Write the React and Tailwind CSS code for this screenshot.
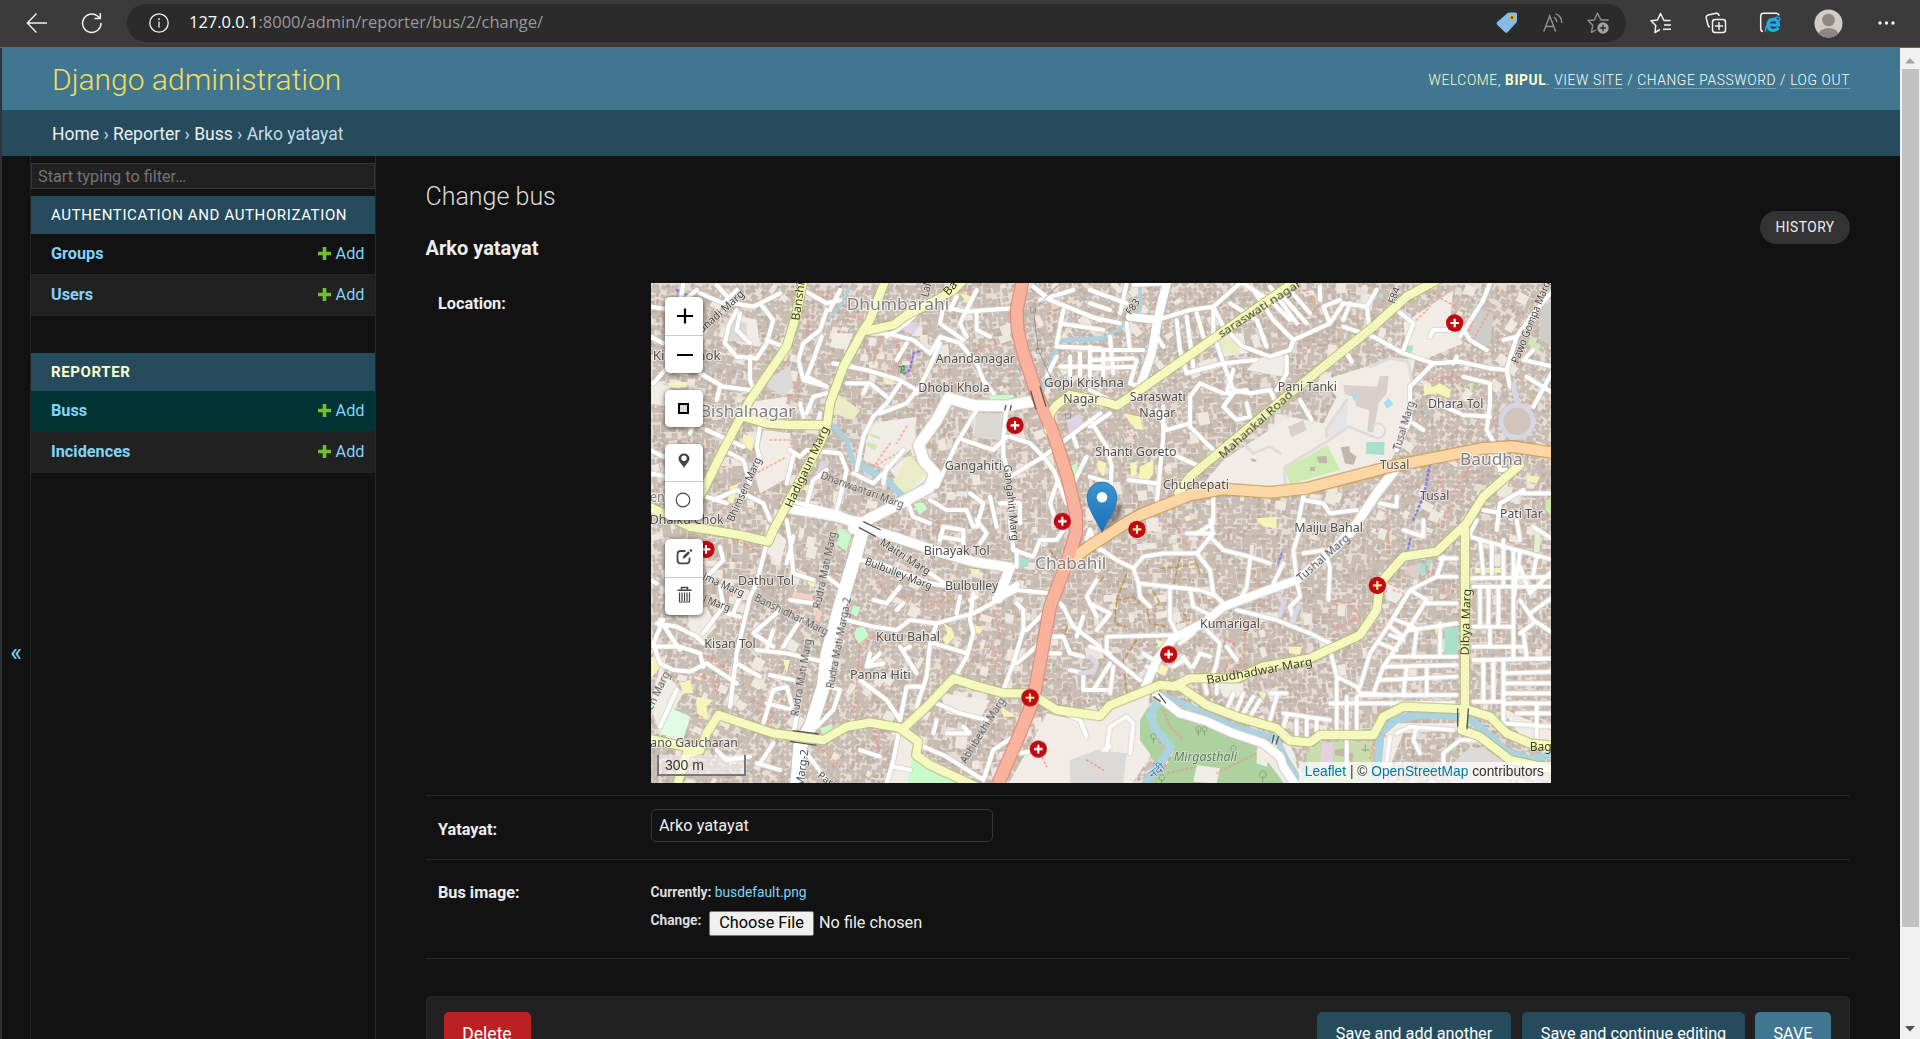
import React from "react";

/* ------------------------------------------------------------------ */
/* Map data: four sheets, three units per pixel                        */
/* ------------------------------------------------------------------ */
const SHEETS = { nw: [-33, -39], ne: [1317, -39], sw: [-33, 711], se: [1317, 711] };

const shift = (q) => `translate(${SHEETS[q][0]} ${SHEETS[q][1]})`;

function makeBuildings(seed, skip, cell, min, spread) {
  let s = seed;
  const rnd = () => {
    s = (s * 1664525 + 1013904223) % 4294967296;
    return s / 4294967296;
  };
  let d = "";
  for (let y = 0; y < 1500; y += cell) {
    for (let x = 0; x < 2700; x += cell) {
      const keep = rnd() > skip;
      const w = min + rnd() * spread;
      const h = min + rnd() * spread;
      const ox = x + rnd() * 7;
      const oy = y + rnd() * 7;
      if (!keep) continue;
      const a = 0.35 * Math.sin(x / 310) + 0.3 * Math.cos(y / 230 + x / 500);
      const c = Math.cos(a);
      const n = Math.sin(a);
      d += `M${ox | 0} ${oy | 0}l${(w * c).toFixed(1)} ${(w * n).toFixed(1)}l${(-h * n).toFixed(1)} ${(h * c).toFixed(1)}l${(-w * c).toFixed(1)} ${(-w * n).toFixed(1)}z`;
    }
  }
  return d;
}
const BUILDINGS_A = makeBuildings(7, 0.1, 15, 9, 11);
const BUILDINGS_B = makeBuildings(91, 0.7, 15, 6, 9);
const YARDS = makeBuildings(313, 0.93, 26, 12, 26);

const OPEN = [
  ["ne", "M830 290L900 262L975 270L955 370L980 400L930 510L905 570L640 645L330 655L400 570L600 440L700 460L740 380L700 330Z"],
  ["ne", "M940 160L1090 60L1080 150L1120 220L1000 270L950 240Z"],
  ["ne", "M500 265L590 255L580 320L470 300Z"],
  ["ne", "M380 190L460 190L470 250L400 260Z"],
  ["nw", "M335 395L440 380L450 440L400 450L320 430Z"],
  ["nw", "M370 480L450 490L460 560L450 620L360 670L340 600Z"],
  ["nw", "M1000 440L1090 450L1085 510L1000 500Z"],
  ["nw", "M690 460L830 440L820 530L740 600L670 570Z"],
  ["nw", "M30 330L90 350L80 410L30 400Z"],
  ["nw", "M270 130L350 150L360 230L290 220Z"],
  ["nw", "M580 190L640 190L620 240L570 230Z"],
  ["nw", "M800 560L880 620L800 670L750 600Z"],
  ["sw", "M60 440L130 520L60 640L30 560Z"],
  ["sw", "M900 520L1050 540L1020 600L920 580Z"],
  ["sw", "M1220 580L1400 620L1400 800L1100 800L1180 660Z"],
  ["sw", "M140 270L200 260L230 320L190 360L150 330Z"],
  ["sw", "M780 640L830 680L830 800L740 800Z"],
  ["sw", "M380 10L440 60L420 130L370 90Z"],
  ["se", "M-60 600L60 560L180 520L170 600L200 680L120 800L-60 800Z"],
  ["se", "M500 680L600 670L640 800L520 800Z"],
  ["se", "M880 610L1100 610L1110 630L940 640L900 740L880 800L860 800Z"],
  ["se", "M380 490L460 490L460 530L400 530Z"],
  ["se", "M890 190L945 215L920 250L890 240Z"],
  ["se", "M1230 560L1400 640L1400 700L1300 660Z"],
];

const AREAS = [
  ["ne", "#cdebb0", "M585 595L712 525L750 600L600 642Z"],
  ["ne", "#aae0cb", "M828 517L884 515L882 555L828 551Z"],
  ["ne", "#aae0cb", "M862 72L878 70L878 84L864 84ZM950 226L970 228L966 246L950 242ZM40 292L60 290L60 303L40 303Z"],
  ["ne", "#cdebb0", "M1320 205L1352 228L1346 242L1312 222ZM1366 690L1390 684V740L1366 720ZM1140 340L1150 338L1148 362L1140 360Z"],
  ["ne", "#d9d0c9", "M760 345L860 350L870 318L896 318L890 370L866 400L850 488L832 484L838 420L800 410L790 380L764 372Z"],
  ["ne", "#d9d0c9", "M594 470L640 450L650 480L604 502ZM690 360L720 350L726 380L700 384Z"],
  ["ne", "#e4e4e4", "M712 480L760 400L775 405L768 470L712 505Z"],
  ["ne", "#cfcdca", "M1150 110L1210 130L1200 230L1120 200Z"],
  ["ne", "#c2b5aa", "M752 532L778 528L780 545L800 560L790 585L765 580ZM680 560L710 558L712 580L686 580ZM660 590L676 592L674 604L660 602ZM484 565A8 8 0 1 0 500 570Z"],
  ["ne", "#cfcdca", "M1350 110L1390 90L1390 230L1350 210Z"],
  ["nw", "#dcdad8", "M390 320L450 290L460 350L430 380L380 350ZM250 140L320 160L320 220L260 210Z"],
  ["nw", "#dcd9d5", "M1010 430L1095 430L1090 510L1000 500Z"],
  ["nw", "#c8facc", "M820 700L850 698L862 716L838 734ZM1284 590L1310 580L1312 610L1290 628ZM1045 376L1110 374L1140 388L1050 392Z"],
  ["nw", "#b8e3cd", "M360 126L384 108L388 130L366 134Z"],
  ["nw", "#cdebb0", "M680 516L712 526L706 540L682 530ZM690 490L720 500L718 508L690 498Z"],
  ["nw", "#e9ecc4", "M806 556L864 602L790 680L756 640ZM590 370L660 420L640 450L580 430Z"],
  ["nw", "#e0d3e6", "M790 160L840 165L820 195L786 180ZM1280 450L1320 430L1336 470L1290 500Z"],
  ["nw", "#d5d5e4", "M540 575L570 570L560 600L530 614ZM670 600L690 590L690 620L670 630Z"],
  ["nw", "#f3cfc4", "M1230 90L1260 80L1262 110L1236 120ZM1130 470L1150 480L1140 500Z"],
  ["nw", "#f7f4b8", "M310 490L344 510L336 542L306 528ZM725 310L764 320L760 345L736 340ZM490 650L516 640L510 680ZM960 70L1000 80L980 100ZM270 650L296 640L280 700L262 700ZM80 340L140 335L140 352L90 352Z"],
  ["ne", "#f7f4b8", "M120 580L140 575L140 612L124 620ZM150 590L190 570L190 610L170 640L146 625ZM1000 345L1030 350L1050 340L1084 360L1076 385L1040 370L1004 376ZM100 430L150 440L160 480L136 476ZM500 745L560 740L560 775L520 770ZM1310 615L1350 620L1340 640L1310 635ZM24 570L50 580L40 620L24 600ZM284 740L300 735L298 752L286 752Z"],
  ["ne", "#e9ecc4", "M385 200L440 210L450 250L400 250Z"],
  ["sw", "#dffce2", "M95 565L152 590L128 660L60 642Z"],
  ["sw", "#c8facc", "M592 25L634 45L620 94L596 78ZM648 325L672 320L686 346L658 372L644 352ZM640 256L662 262L650 290L632 280ZM820 685L1010 800L800 800ZM540 625L576 612L580 636L548 645Z"],
  ["sw", "#aae0cb", "M1124 115L1168 114L1164 140L1118 144Z"],
  ["sw", "#c5e6d2", "M1206 230L1224 240L1216 275L1200 262Z"],
  ["sw", "#f7f4b8", "M120 490L150 480L160 520L128 520ZM170 530L220 540L200 560L205 600L170 580ZM910 310L935 325L945 350L920 375L908 360L922 340ZM990 315L1030 320L1020 342L990 335ZM430 420L450 420L440 460ZM1085 560L1130 590L1090 590ZM500 185L530 180L520 205ZM985 145L1020 150L1010 165ZM30 405L60 440L30 480Z"],
  ["sw", "#f3cfc4", "M460 215L520 225L515 245L455 235ZM530 270L546 275L538 305L526 300Z"],
  ["se", "#aed1a0", "M200 540L250 580L330 615L470 650L500 690L530 720L590 800L140 800L220 760L255 690L215 650L195 600ZM150 600L175 560L200 660L230 690L200 730L150 660Z"],
  ["se", "#aae0cb", "M1065 322L1106 322L1104 406L1062 406ZM984 130L1006 132L1006 160L984 165ZM1010 120L1022 120L1020 138L1008 136Z"],
  ["se", "#c9dcae", "M650 700L690 665L850 665L845 800L650 800Z"],
  ["se", "#e3d0e0", "M696 668L730 668L726 740L692 730Z"],
  ["se", "#c2b5aa", "M735 690L765 685L765 710L735 705ZM770 700L790 700L788 725L770 722Z"],
  ["se", "#d9d0c9", "M950 140L990 130L985 180L945 160Z"],
  ["se", "#f7f4b8", "M1155 144L1236 144L1236 158L1155 158ZM594 380L636 380L630 404L598 400ZM200 360L225 365L215 385L205 380ZM205 430L235 445L225 468L205 460ZM505 515L530 520L520 540ZM1030 320L1045 320L1040 345ZM535 -6L555 0L550 20L535 22Z"],
  ["se", "#f0eee4", "M320 735L390 745L380 790L310 785ZM500 690L540 700L530 740L500 730Z"],
  ["se", "#dcdad6", "M20 690L110 700L100 790L-60 790L-60 720ZM1090 730L1130 690L1180 680L1260 740L1260 800L1080 800Z"],
  ["se", "#e6efd0", "M1335 20L1352 24L1348 96L1332 96Z"],
];

const RIVERS = [
  ["se", 24, "M205 545L180 585L195 625L242 680L215 725L160 800"],
  ["se", 18, "M215 524L300 560L420 615L560 655L585 710L640 800"],
  ["se", 24, "M858 800L872 640L920 597L1000 583L1130 590L1185 635L1250 695L1320 720L1400 700"],
  ["ne", 10, "M150 30L150 120L90 175L40 205L-20 212"],
  ["nw", 12, "M1390 205L1270 210L1240 250L1215 340L1195 400L1130 395"],
  ["nw", 14, "M575 465L620 510L638 575L700 610"],
  ["nw", 20, "M660 585L740 630L800 690"],
  ["nw", 8, "M630 50L600 110L570 140M480 270L500 330"],
];

const MINOR = {
  nw: "M30 110L100 120L170 60M230 45L280 100L340 110L420 70M130 40L120 100M180 70L250 100L290 60M290 120L265 170L255 220L290 260L350 265L380 220L400 150L360 100M380 210L430 230M300 130L290 180L330 220M330 260L330 330L350 380M180 310L250 350L330 360M240 350L230 390M40 340L75 300M30 540L70 560L160 545M200 480L310 530M150 490L170 440M360 470L350 530L360 570M560 120L540 180L490 220L475 270L490 330L560 350M570 120L600 60M490 60L560 100L600 90M545 200L520 270L500 320M500 320L560 350M580 280L680 300L780 330L830 360M620 340L690 340L740 380M680 350L670 370M780 340L740 400L700 440L670 500L650 600M830 360L800 400L720 430M690 190L740 190L820 210L870 250M870 250L900 200L960 220L1010 280L1030 330L1060 370M830 370L870 290L900 220M740 200L800 160L830 130M910 110L980 125L1110 115M910 110L900 160L970 210M1010 130L1010 180L1050 200M930 120L950 80L920 50M980 120L960 160L980 200M1010 60L980 120M800 220L770 270M500 430L520 380L560 370M490 440L480 400M540 430L530 470M450 540L480 560L500 540L600 550L620 600L590 720M560 600L520 630L500 700M640 610L700 640L740 600L790 540M730 640L740 590M800 690L820 740L870 760M870 690L920 720L980 720L1000 770M890 650L950 520L1010 420M970 510L1060 540L1100 500M1100 410L1090 500L1090 560L1110 620L1210 560M1110 500L1170 520L1210 560L1380 430M1300 500L1310 530M1210 560L1240 600L1280 700M1250 640L1230 700L1250 760M1340 560L1300 640M1180 50L1230 90L1380 150M1200 90L1300 60M1260 160L1390 180M1290 260L1290 320M1320 250L1320 320M1350 230L1350 320M1250 230L1380 235M1260 290L1390 290M1250 260L1220 320M1270 120L1250 220M1080 700L1140 700L1140 760M1050 680L1070 770M990 670L1030 700L1010 770M250 540L310 570L330 640M220 690L290 660L370 700L390 750M200 680L260 700M460 560L440 640M440 690L480 700L600 730M30 610L80 620M30 200L70 220",
  ne: "M0 60L110 100M0 100L60 120M110 40L90 130M120 140L200 150L300 120L370 110L450 40M370 110L400 170L460 230L540 260L600 240L610 210L550 150L490 60L460 40M420 100L500 150L530 230M260 150L270 240L290 310L400 280L500 270M290 140L310 290M320 130L340 200M370 120L370 190L400 280L430 360L480 370L540 360L560 400M490 60L540 90L600 150M540 50L620 160M570 70L650 160M600 60L660 130M610 210L720 160L760 100L830 110L860 60M720 160L700 110L750 90M760 150L780 100M760 170L850 200L940 250L1030 280L960 350L960 450L920 540M830 110L840 190M920 120L970 160L940 240M1030 280L1110 275L1200 295L1250 300L1260 350M1250 300L1280 200L1330 130L1390 60M1280 200L1240 210M1330 240L1300 270L1390 290M1110 200L1180 90L1200 40M1020 200L1030 180L1090 180M1110 160L1140 210L1190 240M1120 320L1200 340L1200 400L1190 480L1210 515M1120 435L1200 440M1310 320L1390 370M1390 300L1330 410M590 260L590 310L560 360M430 300L410 370L470 360M470 400L480 440L440 450L400 410L430 370M400 370L330 340L300 380L300 470L380 550M300 460L230 480L200 420M220 410L220 500L200 700M220 540L330 590M115 630L200 640M0 450L50 530L65 590L60 680M0 470L60 430M160 240L110 240L0 240M0 270L130 265M0 295L130 290M60 200L70 310M40 240L40 320M110 160L120 240M0 140L90 160M190 180L220 230M630 390L665 450M0 620L60 640M690 50L690 90M770 250L785 275M1040 400L1110 430M870 700L920 710L920 680M640 690L700 700L720 730L800 720M620 780L640 680M370 680L370 760L320 790M970 460L1000 480M1210 515L1230 600L1250 600M1180 720L1290 740M1220 780L1230 700L1300 660M1290 670L1390 670M1100 260L1090 280M220 40L130 45M140 270L120 340L150 350M0 360L60 390",
  sw: "M440 0L450 60L460 160L520 180M380 70L350 190L330 230L290 400L280 480L270 560M460 50L440 130M560 170L600 200M450 240L520 250M420 270L340 340L400 380M400 330L380 390M480 300L430 380M350 390L440 400L550 425M50 310L110 320L170 350L190 370M40 380L120 380L180 400L190 440M70 300L40 370L60 430L100 450L150 455L200 430L290 490M120 390L60 300M200 170L250 120L240 80M130 260L170 240M240 200L250 260L190 340M280 280L300 230M260 280L300 290M50 190L30 180M110 510L60 620M290 430L360 470M390 465L460 480M380 550L460 570L440 500L400 510L370 610M570 500L600 510L580 570L530 620M470 590L460 640M660 120L720 130L870 190L930 200M870 160L930 200M780 200L740 250L700 240M770 270L790 250M620 300L700 320L770 330L810 300L890 310L1000 280L1130 210M890 310L870 370L860 470L830 560M880 370L980 400M1000 220L990 300L1000 340L980 410L940 480M960 230L950 280M990 240L1010 230M690 400L680 440L730 430M780 380L830 460M790 390L810 380M660 480L740 540L780 600M800 500L780 600M800 500L850 500M690 430L720 400M890 550L960 580L1040 600M920 640L990 640L970 620M880 640L890 600M780 620L760 720L740 790M760 740L810 750M660 690L720 710M350 730L420 750M500 700L560 780M400 670L360 730M230 690L260 720L330 710M1130 210L1230 220L1270 260L1300 320L1380 380M1130 250L1150 270L1150 330L1120 430L1090 510M1220 270L1160 330M1200 370L1130 430M1230 350L1270 350L1290 400L1330 410M1330 290L1310 350M1130 90L1130 140M1110 0L1120 90L1180 110L1200 60L1250 60L1270 30M1350 30L1340 60L1380 90M1370 180L1340 230L1370 290M1290 450L1330 460L1330 510L1400 510M850 680L920 710L1030 780M1030 780L1060 690L1120 650M1140 700L1190 690M1250 570L1320 600L1340 650M900 60L910 20L970 30L970 70M1010 0L1040 40L1020 70M900 50L960 60M1220 400L1260 400",
  se: "M0 30L20 80L80 120L130 145L160 110L220 100L320 100L360 150L370 220L400 250M130 145L145 190L330 210L370 225M145 190L150 230L180 260M240 210L240 300L260 340M50 350L250 345M50 350L50 400L150 480M0 250L60 280L20 330M0 380L60 400M60 430L10 510M70 440L60 520M300 210L310 260L370 290M290 40L370 40L320 100M370 40L360 0M370 60L400 90L480 110L540 130M480 120L470 200L450 240M580 130L550 190M640 100L700 90L720 140L715 240M640 0L610 90L620 180L630 230L600 260M440 270L560 300L660 340L720 370M350 330L390 370L380 430L370 460M410 380L440 420M310 440L330 400L360 410M280 410L300 440M250 440L280 420M270 370L310 340M160 400L190 420M600 260L610 300M1000 0L1000 50L940 30M1140 50L1280 90L1390 120M1150 200L1390 200M1140 175L1390 170M1100 170L1040 170L960 210L900 310L840 400L810 500M960 210L1010 240L940 350L880 440L850 520M1060 110L1040 170M1050 115L1100 115M1100 250L1010 250M1100 310L960 330M1050 310L1050 400M1100 410L900 410M1100 435L880 440M1100 470L870 480M1100 525L810 525M980 330L970 410M1010 440L1010 520M950 440L940 520M920 300L970 320M900 320L940 350M870 370L920 390M720 390L740 470L800 500L810 520L900 525M740 480L740 630M770 530L770 630M800 530L800 630M720 550L1090 550M580 580L720 600M590 590L580 620M620 600L620 660M650 600L650 650M680 600L680 640M430 520L410 570M460 520L440 570M490 530L460 580M510 540L480 590M540 520L590 520M560 530L540 600M770 660L770 740M900 650L890 720M980 620L970 660L990 700M920 640L960 620L1090 630M1060 740L1060 700L1110 660L1160 660M60 680L40 690M50 690L60 620L110 590L130 610L120 700M1240 60V200M1270 90V420M1290 100L1270 240M1340 110L1330 160M1150 320L1270 320M1150 380L1300 380M1150 420L1390 415M1150 545L1230 545M1170 60L1180 160M1205 70V160M1170 210V310M1195 210V310M1225 210V310M1200 320V380M1180 425V540M1210 425V540M1240 425V600M1240 460L1390 455M1240 490L1390 490M1240 520L1390 520M1240 550L1390 550M1280 580L1390 580M1240 610L1390 620M1340 560L1340 660M1290 240L1330 300L1390 340M1320 280L1390 230M1290 140L1320 220L1390 150M1290 340L1330 310M1300 340L1310 410M1330 20L1390 60M1280 0L1290 60M1160 0L1140 40M340 470L350 520M380 470L380 520M170 440L200 450M940 360L900 345",
};

const MID = [
  ["nw", 34, "M1185 392L1100 408L1000 406L925 384L890 450L836 525L850 570L885 610L868 652L800 690L690 745L640 775"],
  ["nw", 28, "M440 715L470 720L560 735L680 760"],
  ["sw", 30, "M600 -10L680 25L760 50L880 90L1000 125L1110 142L1075 235"],
  ["sw", 20, "M1065 235L1130 195"],
  ["sw", 40, "M665 40L645 110L600 260L562 400L550 500L515 610L480 680L470 800"],
  ["ne", 26, "M232 30L205 140L185 250L150 350"],
  ["ne", 24, "M200 150L120 140"],
  ["ne", 28, "M915 600L860 670L780 790"],
  ["se", 26, "M790 20L740 80L620 180L520 215L400 260L340 310L250 355L200 420L165 500"],
  ["se", 26, "M200 525L270 580L340 600L430 640L520 670L570 710L580 740L620 800"],
];

const YELLOW = [
  ["nw", "M492 20L470 130L440 230L330 390L260 520L190 660L165 705"],
  ["nw", "M740 20L690 150L670 180L610 290L570 400L560 470L540 520L400 780L385 815L300 795L150 770L30 712"],
  ["nw", "M980 20L940 60L890 90L800 135L760 165L680 182"],
  ["nw", "M300 437L380 460L450 465L555 465"],
  ["nw", "M1225 480L1230 430L1250 405L1290 375L1400 397L1430 407L1500 360L1650 255L1960 38"],
  ["ne", "M265 670L300 620L600 370L850 170L950 80L1050 25"],
  ["sw", "M20 655L180 690L200 640L235 585L400 640L550 660L620 620L690 608L790 625L860 560L940 475L1000 495L1090 520L1170 520L1250 570L1380 588L1410 555L1560 495L1620 500L1700 555L1790 590L1910 625L1950 662L2010 667L2040 645L2200 645L2230 590L2290 560L2480 568L2550 590L2600 640L2670 670L2760 680"],
  ["sw", "M180 690L140 700L110 800"],
  ["sw", "M780 625L835 665L828 705L870 735L1010 800"],
  ["se", "M250 500L300 475L440 475L520 440L660 415L810 345L860 270L870 190L940 110L1040 95L1130 10L1180 -70L1290 -165"],
  ["se", "M1125 30L1125 560L1115 630L1170 650L1260 720L1400 750"],
];

const TRUNK = ["nw", "M1150 20L1130 120L1133 180L1150 250L1190 370L1240 490L1282 620L1308 730L1308 790L1280 880L1230 1010L1205 1150L1180 1290L1140 1390L1062 1570"];
const PRIMARY = ["ne", "M-70 880L0 828L90 770L150 735L300 675L400 657L540 667L650 655L900 590L1180 535L1270 530L1400 550"];

const PATHS = [
  ["nw", "#f88d83", "M500 140L510 200L470 260L480 330L440 400M520 60L590 80M640 140L700 160M730 170L700 280M760 200L790 260L740 310M390 510L450 510L470 590M330 620L440 560M750 520L700 590L790 540M800 470L770 520M930 60L1000 60M1010 240L1070 220M50 90L70 150M220 400L200 430M660 730L680 760"],
  ["ne", "#f88d83", "M1020 60L1060 90L1100 110M980 150L1020 110M1170 100L1130 200L1150 230M1200 120L1150 210M640 60L690 100L610 180M100 450L130 500M1000 330L1080 320L1120 330M1140 590L1100 650L1060 760M1210 450L1220 480M1320 400L1330 380M1050 620L1060 690"],
  ["sw", "#f88d83", "M290 60L380 110M240 200L280 230M700 160L740 220L820 240M740 320L660 380L640 600M900 200L960 260M1060 270L1080 340L1120 345M60 330L130 320M200 410L270 450M340 540L400 580L380 610M140 460L220 480L230 520M1040 380L1080 400L1060 450M700 620L720 700M540 680L600 740M1200 700L1220 740M860 260L900 240M1340 720L1390 750"],
  ["se", "#f88d83", "M250 10L300 90M480 170L500 180L490 220M470 300L460 420L400 480M390 350L430 370L400 470M720 240L780 250L810 290L730 330L720 260M910 210L940 220M1060 190L1070 240M890 10L900 100M220 570L240 620L280 660M380 760L500 700M850 670L840 720M320 740L230 760M870 640L890 650M850 320L880 340"],
  ["sw", "#b98d3b", "M1230 90L1250 120M1280 320L1270 370M1220 480L1190 470"],
  ["se", "#b98d3b", "M110 160L80 240L75 310L110 320M80 240L130 230L150 250M190 215L210 250L170 270L180 310L230 320M210 145L270 140L320 130M270 110L250 200M280 280L300 300L260 310M320 130L330 160M140 360L100 420L110 520M40 170L30 190"],
  ["nw", "#5b5bff", "M110 60L150 80M600 50L580 100M850 240L820 250L810 300L790 312"],
  ["ne", "#5b5bff", "M1020 585L1000 680L970 750"],
  ["se", "#5b5bff", "M962 55L950 100M575 100L565 130"],
];

/* [sheet, text, centre x, centre y, length, size, angle, style] */
const LABELS = [
  ["nw", "Dhumbarahi", 774, 104, 308, 46, 0, "town"],
  ["nw", "Bishalnagar", 323, 426, 286, 46, 0, "town"],
  ["nw", "Kiran Chok", 140, 256, 204, 38, 0, "place"],
  ["nw", "Anandanagar", 1006, 265, 238, 38, 0, "place"],
  ["nw", "Dhobi Khola", 942, 354, 214, 38, 0, "place"],
  ["nw", "Gangahiti", 1000, 588, 172, 38, 0, "place"],
  ["nw", "Gopi Krishna", 1332, 338, 240, 38, 0, "place"],
  ["nw", "Nagar", 1324, 386, 108, 38, 0, "place"],
  ["nw", "Dhaiku Chok", 140, 749, 222, 38, 0, "place"],
  ["nw", "en", 52, 682, 44, 44, 0, "town"],
  ["nw", "nanadi Marg", 236, 130, 190, 33, -42, "road"],
  ["nw", "Banshi", 474, 94, 116, 35, -82, "main"],
  ["nw", "Hadigaun Marg", 500, 590, 265, 35, -65, "main"],
  ["nw", "Bhimsen Marg", 312, 658, 208, 33, -66, "road"],
  ["nw", "Dhanwantari Marg", 668, 658, 262, 33, 20, "road"],
  ["nw", "Gangahiti Marg", 1115, 698, 230, 33, 84, "road"],
  ["nw", "Lal", 858, 60, 42, 33, -75, "road"],
  ["nw", "Ba", 930, 54, 44, 36, -50, "main"],
  ["ne", "saraswati nagar", 508, 114, 290, 35, -33, "main"],
  ["ne", "Mahankal Road", 496, 462, 285, 35, -42, "main"],
  ["ne", "F83", 128, 110, 50, 30, -55, "road"],
  ["ne", "F84", 912, 76, 50, 30, -70, "road"],
  ["ne", "Saraswati", 203, 380, 168, 38, 0, "place"],
  ["ne", "Nagar", 202, 427, 108, 38, 0, "place"],
  ["ne", "Pani Tanki", 652, 351, 178, 38, 0, "place"],
  ["ne", "Shanti Goreto", 138, 546, 244, 38, 0, "place"],
  ["ne", "Chuchepati", 318, 645, 198, 38, 0, "place"],
  ["ne", "Dhara Tol", 1097, 402, 166, 38, 0, "place"],
  ["ne", "Tusal", 914, 584, 88, 38, 0, "place"],
  ["ne", "Tusal", 1034, 678, 88, 38, 0, "place"],
  ["ne", "Baudha", 1204, 568, 188, 46, 0, "town"],
  ["ne", "Pati Tar", 1294, 730, 128, 38, 0, "place"],
  ["ne", "Maiju Bahal", 716, 774, 206, 38, 0, "place"],
  ["ne", "Tusal Marg", 940, 466, 152, 33, -73, "road"],
  ["ne", "Pawo Gompa Marg", 1322, 156, 262, 33, -68, "road"],
  ["sw", "Binayak Tol", 950, 91, 198, 38, 0, "place"],
  ["sw", "Bulbulley", 995, 198, 160, 38, 0, "place"],
  ["sw", "Dathu Tol", 378, 181, 168, 38, 0, "place"],
  ["sw", "Kisan Tol", 270, 372, 154, 38, 0, "place"],
  ["sw", "Kutu Bahal", 804, 351, 192, 38, 0, "place"],
  ["sw", "Panna Hiti", 721, 465, 182, 38, 0, "place"],
  ["sw", "ano Gaucharan", 162, 667, 262, 38, 0, "place"],
  ["sw", "Chabahil", 1292, 132, 214, 46, 0, "town"],
  ["sw", "Maitri Marg", 796, 110, 172, 33, 33, "road"],
  ["sw", "Bulbulley Marg", 776, 160, 212, 33, 21, "road"],
  ["sw", "Rudra Mati Marg", 552, 150, 235, 33, -78, "road"],
  ["sw", "Rudra Mati Marga-2", 594, 368, 276, 33, -79, "road"],
  ["sw", "Rudra Mati Marg", 482, 472, 235, 33, -80, "road"],
  ["sw", "Banshidhar Marg", 455, 282, 242, 33, 26, "road"],
  ["sw", "ulma Marg", 243, 190, 150, 33, 24, "road"],
  ["sw", "hal Marg", 215, 244, 116, 33, 20, "road"],
  ["sw", "sen Marg", 48, 518, 138, 33, -64, "road"],
  ["sw", "Marg-2", 486, 744, 112, 33, -82, "road"],
  ["sw", "Pari", 560, 778, 56, 30, 35, "road"],
  ["sw", "Abhibekhi Marg", 1026, 630, 225, 33, -58, "road"],
  ["se", "Tushal Marg", 698, 112, 196, 33, -41, "road"],
  ["se", "Kumarigal", 420, 312, 180, 38, 0, "place"],
  ["se", "Baudhadwar Marg", 508, 452, 322, 36, -10, "main"],
  ["se", "Dibya Marg", 1127, 306, 200, 36, -88, "main"],
  ["se", "Mirgasthali", 346, 710, 190, 36, 0, "park"],
  ["se", "Bag", 1352, 681, 66, 36, 0, "main"],
  ["se", "नदी", 200, 752, 52, 34, -38, "river"],
];

const HOSPITALS = [
  ["nw", 1125, 466], ["nw", 1267, 754], ["ne", 1094, 159], ["ne", 141, 778],
  ["sw", 198, 88], ["sw", 1170, 533], ["sw", 1195, 687], ["se", 862, 196], ["se", 236, 403],
];

const LABEL_CLASS = {
  town: "fill-[#85817e] stroke-white/70 stroke-[7px]",
  place: "fill-[#4f4d4b] stroke-white/60 stroke-[6px]",
  road: "fill-[#454341] stroke-white/60 stroke-[4px]",
  main: "fill-[#3a3b22] stroke-[#f7fabf] stroke-[2px]",
  park: "fill-[#5f7a5c] stroke-white/50 stroke-[4px] italic",
  river: "fill-[#3d78b4] stroke-white/50 stroke-[3px]",
};

function MapDrawing() {
  const strokes = (list, color, extra, base) =>
    list.map((r, i) => (
      <path key={i} transform={shift(r[0])} d={r[r.length - 1]} stroke={color} strokeWidth={(base || r[1]) + extra} />
    ));
  return (
    <svg viewBox="0 0 2700 1500" className="block h-[500px] w-[900px]">
      <defs>
        <pattern id="grain" width="14" height="14" patternUnits="userSpaceOnUse">
          <circle cx="3" cy="3" r="1.4" fill="#c9c692" />
          <circle cx="10" cy="9" r="1.4" fill="#c9c692" />
        </pattern>
      </defs>
      <rect width="2700" height="1500" fill="#e6ddd6" />
      <path d={BUILDINGS_A} fill="#c9bcb2" />
      <path d={BUILDINGS_B} fill="#c0b1a6" />
      <path d={YARDS} fill="#eee8e0" />
      {OPEN.map(([q, d], i) => (
        <path key={i} transform={shift(q)} d={d} fill="#f1ede6" />
      ))}
      {AREAS.map(([q, c, d], i) => (
        <path key={i} transform={shift(q)} d={d} fill={c} />
      ))}
      <g fill="none" strokeLinejoin="round" strokeLinecap="round">
        {strokes(RIVERS, "#aad3df", 0)}
        <g opacity="0.85">
          {PATHS.map(([q, c, d], i) => (
            <path key={i} transform={shift(q)} d={d} stroke={c} strokeDasharray={c === "#b98d3b" ? "14 9" : "5 9"} strokeWidth={c === "#5b5bff" ? 6 : 4.5} />
          ))}
        </g>
        {Object.entries(MINOR).map(([q, d]) => (
          <path key={q} transform={shift(q)} d={d} stroke="#d2cac4" strokeWidth="16" />
        ))}
        {strokes(MID, "#c4bfba", 5)}
        {Object.entries(MINOR).map(([q, d]) => (
          <path key={q} transform={shift(q)} d={d} stroke="#ffffff" strokeWidth="12.5" />
        ))}
        <g transform={shift("ne")} stroke="#d5d5e4">
          <path d="M1270 345L1282 400M1268 505V520" strokeWidth="16" />
          <circle cx="1281" cy="454" r="48" strokeWidth="15" fill="#cfc3ba" />
        </g>
        <g transform={shift("ne")} stroke="#dedcd9" strokeWidth="9">
          <path d="M585 640V590L710 515L775 470L850 500M710 500V475L770 390M460 520L490 550L540 530L570 550M840 290L900 265L955 275L965 330" />
          <path d="M850 465A22 22 0 1 1 850 500" strokeWidth="6" />
        </g>
        <g transform={shift("se")} stroke="#d9d9e6" strokeWidth="14">
          <path d="M565 225L580 250L570 285M625 260L605 305M0 410L20 430L10 455L-30 460" />
        </g>
        {strokes(MID, "#ffffff", 0)}
        {strokes(YELLOW, "#b3b96c", 5, 25)}
        <path transform={shift(PRIMARY[0])} d={PRIMARY[1]} stroke="#c59a52" strokeWidth="38" />
        <path transform={shift(TRUNK[0])} d={TRUNK[1]} stroke="#dd8f7c" strokeWidth="42" />
        {strokes(YELLOW, "#f6f9bf", 0, 25)}
        <path transform={shift("ne")} d="M275 650L300 620L600 370L850 170" stroke="url(#grain)" strokeWidth="22" />
        <path transform={shift("se")} d="M1125 45L1124.500 560" stroke="url(#grain)" strokeWidth="20" />
        <path transform={shift(PRIMARY[0])} d={PRIMARY[1]} stroke="#fcd6a4" strokeWidth="32" />
        <path transform={shift(TRUNK[0])} d={TRUNK[1]} stroke="#f9b29c" strokeWidth="35" />
        <g stroke="#555" strokeWidth="4" strokeLinecap="butt">
          <path transform={shift("nw")} d="M670 755L722 780M656 772L708 800M1172 362L1188 418M1200 350L1218 410M1098 405L1094 422M1114 405L1110 422" />
          <path transform={shift("sw")} d="M458 632L536 642M450 664L530 676" />
          <path transform={shift("se")} d="M1103 565V620M1135 565L1131 628M205 520L228 550M190 530L212 545M552 645L546 670M566 648L558 674" />
        </g>
        <g transform={shift("nw")} stroke="#8b8885" strokeWidth="2.500">
          <path d="M1260 40L1180 120L1195 240L1240 340M1172 113h14v14h-14zM1190 236h14v14h-14zM1278 431h14v14h-14z" />
        </g>
        <g transform={shift("se")} stroke="#86a878" strokeWidth="3">
          <path d="M325 628v18M325 618a8 10 0 1 0 1 0M343 632v14M343 618a7 9 0 1 0 1 0M190 655v14M190 640a8 9 0 1 0 1 0M518 770v16M518 752a10 11 0 1 0 1 0M430 690v14M430 676a8 9 0 1 0 1 0M215 780v10M215 764a8 9 0 1 0 1 0M815 690h22M826 674v20M700 765h24M712 752v18" />
        </g>
      </g>
      <path transform={shift("nw")} d="M776 290h8v10h8v-12h-6M790 306h-10" fill="none" stroke="#3c9a4a" strokeWidth="4" />
      <path transform={shift("ne")} d="M880 400L896 385L910 402L892 416ZM786 378L802 368L806 384L790 392ZM1224 368L1236 366L1234 378Z" fill="#a8dcee" />
      <g fontFamily='"Noto Sans", "Open Sans", sans-serif' textAnchor="middle" strokeLinejoin="round">
        {LABELS.map(([q, t, x, y, len, size, a, kind], i) => (
          <text
            key={i}
            transform={`translate(${SHEETS[q][0] + x} ${SHEETS[q][1] + y}) rotate(${a})`}
            y={size * 0.35}
            fontSize={size}
            textLength={len}
            lengthAdjust="spacingAndGlyphs"
            className={LABEL_CLASS[kind]}
            paintOrder="stroke"
          >
            {t}
          </text>
        ))}
      </g>
      {HOSPITALS.map(([q, x, y], i) => (
        <g key={i} transform={`translate(${SHEETS[q][0] + x} ${SHEETS[q][1] + y})`}>
          <circle r="26" fill="#c00a0f" />
          <path d="M-13 0H13M0 -13V13" stroke={i === 3 || i === 7 || i === 5 ? "#f8e3a8" : "#fff"} strokeWidth="6.500" />
        </g>
      ))}
    </svg>
  );
}

/* ------------------------------------------------------------------ */
/* Leaflet controls                                                    */
/* ------------------------------------------------------------------ */
function ControlGroup({ className, children }) {
  return (
    <div className={`absolute left-[14px] flex w-[38px] flex-col divide-y divide-[#ccc] overflow-hidden rounded-[5px] bg-white shadow-[0_1px_5px_rgba(0,0,0,0.65)] ${className}`}>
      {React.Children.map(children, (c) => (
        <div className="flex flex-1 items-center justify-center">{c}</div>
      ))}
    </div>
  );
}

function MapWidget() {
  return (
    <div className="relative h-[500px] w-[900px] overflow-hidden bg-[#ddd]">
      <MapDrawing />
      <svg className="absolute top-[198px] left-[435px]" width="58" height="54" viewBox="0 0 58 54">
        <defs>
          <linearGradient id="pin" x1="0" y1="0" x2="0" y2="1">
            <stop offset="0" stopColor="#3d95cf" />
            <stop offset="1" stopColor="#1a6fbd" />
          </linearGradient>
          <filter id="soft" x="-30%" y="-30%" width="160%" height="160%">
            <feGaussianBlur stdDeviation="1.800" />
          </filter>
        </defs>
        <path d="M17 50L22 34Q28 22 36 24Q38 33 27 43Z" fill="#000" opacity="0.34" filter="url(#soft)" />
        <path d="M16 51.500C13 43 1.200 28 1.200 16.200A14.800 15.200 0 0 1 30.800 16.200C30.800 28 19 43 16 51.500Z" fill="url(#pin)" stroke="#2a74ad" strokeWidth="1" />
        <circle cx="16" cy="16.200" r="5.300" fill="#fff" />
      </svg>

      <ControlGroup className="top-[14px] h-[76px]">
        <svg className="ml-0.5" width="16" height="16" viewBox="0 0 16 16" stroke="#000" strokeWidth="2.200"><path d="M0 8H16M8 0.500V15.500" /></svg>
        <svg className="mt-px ml-0.5" width="16" height="16" viewBox="0 0 16 16" stroke="#000" strokeWidth="2.200"><path d="M0 8H16" /></svg>
      </ControlGroup>
      <ControlGroup className="top-[107px] h-[37px]">
        <div className="-mt-px mr-0.5 size-[11px] border-[2.5px] border-black bg-[#ddd]" />
      </ControlGroup>
      <ControlGroup className="top-[160.500px] h-[76px]">
        <svg className="-mt-[2px]" width="12" height="16" viewBox="0 0 12 16"><path fillRule="evenodd" d="M6 15C4.500 11.500 0.500 9 0.500 5.500A5.500 5 0 0 1 11.500 5.500C11.500 9 7.500 11.500 6 15ZM6 2.600A2.700 2.700 0 1 0 6 8A2.700 2.700 0 1 0 6 2.600Z" fill="#464646" /></svg>
        <svg className="-mt-[2px] mr-0.5" width="16" height="16" viewBox="0 0 16 16"><circle cx="8" cy="8" r="6.800" fill="none" stroke="#464646" strokeWidth="1.200" /></svg>
      </ControlGroup>
      <ControlGroup className="top-[256px] h-[76px]">
        <svg className="-mt-[3px]" width="17" height="17" viewBox="0 0 17 17" fill="none" stroke="#464646"><path d="M9.500 3H4.500Q1.500 3 1.500 6V12.500Q1.500 15.300 4.500 15.300H10.500Q13.500 15.300 13.500 12.500V9.500" strokeWidth="1.800" /><path d="M6.500 10.800L7.500 7.800L12.200 3.200L14 5L9.300 9.800Z" fill="#464646" stroke="none" /><path d="M13.300 2.500L15.500 4.300L16.300 2L14.700 1Z" fill="#464646" stroke="none" /></svg>
        <svg className="-mt-[3px]" width="15" height="18" viewBox="0 0 15 18" fill="none" stroke="#464646"><path d="M0.500 4.200H14.500M4.500 4V1.500H10.500V4" strokeWidth="1.500" /><path d="M2.500 6.500V16H12.500V6.500M5 6.500V15M7.500 6.500V15M10 6.500V15" strokeWidth="1.200" /></svg>
      </ControlGroup>

      <div className="absolute bottom-[7px] left-[6px] flex h-[21px] w-[89px] items-center border-2 border-t-0 border-[#777] bg-white/50 px-1.5 pt-px font-['Liberation_Sans',Arial,sans-serif] text-[14px] text-[#333]">300 m</div>
      <div className="absolute right-0 bottom-0 flex h-[21px] items-center justify-end bg-white/70 pr-[7px] pb-[2px] pl-[6px] font-['Liberation_Sans',Arial,sans-serif] text-[13.75px] leading-none whitespace-pre text-[#333]">
        <span className="text-[#0078a8]">Leaflet</span> | © <span className="text-[#0078a8]">OpenStreetMap</span> contributors
      </div>
    </div>
  );
}

/* ------------------------------------------------------------------ */
/* Browser toolbar                                                     */
/* ------------------------------------------------------------------ */
function BrowserBar() {
  return (
    <div className="flex h-[48px] shrink-0 flex-col border-b border-[#75645f] bg-[#3b3b3b]">
      <div className="flex h-[46px] items-center">
        <svg className="ml-[26px]" width="22" height="22" viewBox="0 0 22 22" fill="none" stroke="#f2f2f2" strokeWidth="1.400"><path d="M21 11H1.500M10.500 1.500L1.300 11L10.500 20.500" /></svg>
        <svg className="ml-[33px]" width="22" height="22" viewBox="0 0 22 22" fill="none" stroke="#f2f2f2" strokeWidth="1.500"><path d="M20 11A9.200 9.200 0 1 1 16.500 4L19 6.200M19.300 1V6.500H13.500" /></svg>
        <div className="ml-[24px] flex h-[38px] w-[1499px] items-center rounded-full bg-[#2b2b2b]">
          <svg className="ml-[22px]" width="20" height="20" viewBox="0 0 20 20" fill="none" stroke="#f2f2f2" strokeWidth="1.300"><circle cx="10" cy="10" r="9.200" /><path d="M10 8.500V14.500" /><path d="M10 5.300V6.900" strokeWidth="1.600" /></svg>
          <svg width="370" height="26" viewBox="0 0 370 26" className="ml-[20px] block overflow-visible font-['Open_Sans','Noto_Sans',sans-serif]">
            <text x="0" y="18" fontSize="17" textLength="354" lengthAdjust="spacingAndGlyphs"><tspan fill="#ffffff">127.0.0.1</tspan><tspan fill="#9a9a9a">:8000/admin/reporter/bus/2/change/</tspan></text>
          </svg>
          <div className="flex-1" />
          <svg width="22" height="22" viewBox="0 0 22 22"><path d="M11 1.500Q12 0.500 13.500 0.500H19.500Q21 0.500 21 2V8.500Q21 10 20 11L11.500 20.200Q10.200 21.500 9 20.200L1 12.500Q0 11.300 1 10.300Z" fill="#86bbe9" /><circle cx="16" cy="5.500" r="2" fill="#3b3b3b" stroke="#f0b400" strokeWidth="1.500" /></svg>
          <svg className="ml-[25px]" width="20" height="20" viewBox="0 0 20 20" fill="none" stroke="#929292" strokeWidth="1.400"><path d="M0.700 18.500L6.700 3L12.700 18.500M2.800 13.500H10.600M11 4Q13.500 5.500 13.800 9M12.500 0.800Q18.500 2.500 18.800 10" /></svg>
          <svg className="ml-[24px]" width="22" height="22" viewBox="0 0 22 22" fill="none" stroke="#929292" strokeWidth="1.400"><path d="M20.500 9L21 8H14L10.500 1.200L7.300 8L1 8.500L5.700 13.300L4.500 20.300L9 18" strokeLinejoin="round" /><circle cx="16" cy="16" r="5.700" fill="#a2a2a2" stroke="none" /><path d="M16 12.800V19.200M12.800 16H19.200" stroke="#2b2b2b" /></svg>
          <div className="w-[17px]" />
        </div>
        <svg className="ml-[24px]" width="22" height="22" viewBox="0 0 22 22" fill="none" stroke="#f2f2f2" strokeWidth="1.500" strokeLinejoin="round"><path d="M20.500 8.500H14L10.500 1.500L7.500 8L1 8.800L5.700 13.500L5 20.500L10 17.500M14 13H21M13 17.300H21" /></svg>
        <svg className="ml-[33px]" width="22" height="22" viewBox="0 0 22 22" fill="none" stroke="#f2f2f2" strokeWidth="1.500"><path d="M14 4V3.500Q13.500 0.800 11 1.200L3 3Q0.800 3.700 1.200 6L3 13Q3.500 15 5 15" /><rect x="7.500" y="7.500" width="13" height="13" rx="2.500" /><path d="M14 10V18M10 14H18" /></svg>
        <svg className="ml-[32px]" width="23" height="22" viewBox="0 0 23 22" fill="none"><path d="M20 3.500Q19.500 1.200 17 1.200H4.500Q1.700 1.200 1.700 4V16.500Q1.700 19.300 4 19.500" stroke="#f2f2f2" strokeWidth="1.500" /><path d="M19.300 15.500Q17.500 18.500 14 18.500Q9 18.300 9 12.800Q9.300 7.300 14 7.300Q19.200 7.500 19.500 13H9.500" stroke="#1eaee8" strokeWidth="3.200" /><path d="M7 19.500Q5 16 11 9.500Q17 4 20 5.500Q21.500 6.500 20.300 9" stroke="#1eaee8" strokeWidth="1.400" /></svg>
        <svg className="ml-[31.500px]" width="29" height="29" viewBox="0 0 29 29"><defs><clipPath id="face"><circle cx="14.500" cy="14.500" r="14" /></clipPath></defs><circle cx="14.500" cy="14.500" r="14" fill="#d0cdc9" /><g clipPath="url(#face)" fill="#8c8784"><circle cx="14.500" cy="11" r="6.300" /><ellipse cx="14.500" cy="26.500" rx="10.500" ry="7.500" /></g></svg>
        <svg className="ml-[34px]" width="20" height="6" viewBox="0 0 20 6" fill="#f2f2f2"><circle cx="3" cy="3" r="1.700" /><circle cx="9.500" cy="3" r="1.700" /><circle cx="16" cy="3" r="1.700" /></svg>
      </div>
    </div>
  );
}

/* ------------------------------------------------------------------ */
/* Django admin                                                        */
/* ------------------------------------------------------------------ */
function NavRow({ label, rowClass }) {
  return (
    <div className={`flex h-[41px] items-center justify-between border-b border-[#272727] pr-[10.5px] pl-[20px] text-[16.25px] text-[#81d4fa] ${rowClass}`}>
      <span className="font-bold">{label}</span>
      <span className="flex items-center gap-[5px]">
        <svg className="-mt-px" width="13" height="13" viewBox="0 0 13 13" stroke="#70bf2b" strokeWidth="3.600"><path d="M6.500 0V13M0 6.500H13" /></svg>
        Add
      </span>
    </div>
  );
}

function Sidebar() {
  return (
    <div className="flex w-[346px] shrink-0 flex-col border-x border-[#272727]">
      <div className="mt-[7px] flex h-[26px] items-center border border-[#353535] bg-[#212121] pt-[2px] pl-[6px] text-[16.25px] text-[#757575]">Start typing to filter…</div>
      <div className="mt-[7px] flex h-[38px] items-center bg-[#264b5d] pl-[20px] text-[15px] tracking-[0.625px] text-white">AUTHENTICATION AND AUTHORIZATION</div>
      <NavRow label="Groups" rowClass="bg-[#121212]" />
      <NavRow label="Users" rowClass="bg-[#212121]" />
      <div className="mt-[37px] flex h-[38px] items-center bg-[#264b5d] pl-[20px] text-[15px] font-bold tracking-[0.625px] text-[#ffffcc]">REPORTER</div>
      <NavRow label="Buss" rowClass="bg-[#003333]" />
      <NavRow label="Incidences" rowClass="bg-[#212121]" />
    </div>
  );
}

function ToolLink({ children }) {
  return <span className="border-b border-white/30 text-white">{children}</span>;
}

export default function App() {
  return (
    <div className="flex h-[1039px] w-[1920px] flex-col overflow-hidden bg-[#121212] font-['Roboto',sans-serif] text-[#eee]">
      <BrowserBar />
      <div className="flex min-h-0 flex-1">
        <div className="w-[2px] shrink-0 bg-[#2d3338]" />
        <div className="flex min-w-0 flex-1 flex-col">
          <header className="flex h-[62px] shrink-0 items-center justify-between bg-[#417690] px-[50px] pt-[2px]">
            <h1 className="text-[30px] leading-none font-light text-[#f5dd5d]">Django administration</h1>
            <div className="text-[13.75px] leading-[17px] font-light tracking-[0.625px] whitespace-pre text-[#ffffcc]">
              WELCOME, <b className="font-bold">BIPUL</b>. <ToolLink>VIEW SITE</ToolLink> / <ToolLink>CHANGE PASSWORD</ToolLink> / <ToolLink>LOG OUT</ToolLink>
            </div>
          </header>
          <nav className="flex h-[46px] shrink-0 items-center bg-[#264b5d] pt-[2px] pl-[50px] text-[17.5px] whitespace-pre text-[#c4dce8]">
            <span className="text-[#eee]">Home</span> › <span className="text-[#eee]">Reporter</span> › <span className="text-[#eee]">Buss</span> › Arko yatayat
          </nav>
          <div className="flex min-h-0 flex-1">
            <div className="flex w-[28px] shrink-0 justify-center pt-[479px] text-[25px] leading-[36px] text-[#81d4fa]">«</div>
            <Sidebar />
            <main className="min-w-0 flex-1 pr-[50px] pl-[49.5px]">
              <h1 className="mt-[26px] h-[29px] text-[25px] leading-[30px] font-light text-[#dcdcdc]">Change bus</h1>
              <div className="flex h-[72px] justify-between">
                <h2 className="pt-[25px] text-[20px] leading-[24px] font-bold">Arko yatayat</h2>
                <div className="flex h-[33px] w-[90px] items-center justify-center rounded-full bg-[#333] text-[13.75px] tracking-[0.5px] text-[#eee]">HISTORY</div>
              </div>
              <div className="flex h-[513px] border-b border-[#272727]">
                <div className="w-[225.5px] shrink-0 pt-[11px] pl-[12.5px] text-[16.25px] leading-[20px] font-bold">Location:</div>
                <MapWidget />
              </div>
              <div className="flex h-[64px] items-start border-b border-[#272727]">
                <div className="w-[225.5px] shrink-0 pt-[24px] pl-[12.5px] text-[16.25px] leading-[20px] font-bold">Yatayat:</div>
                <div className="mt-[13px] flex h-[33px] w-[342px] items-center rounded-[5px] border border-[#353535] pt-px pl-[7px] text-[16.25px]">Arko yatayat</div>
              </div>
              <div className="flex h-[99px] items-start border-b border-[#272727]">
                <div className="w-[225px] shrink-0 pt-[23px] pl-[12.5px] text-[16.25px] leading-[20px] font-bold">Bus image:</div>
                <div className="flex flex-col pt-[23px] text-[13.75px]">
                  <div className="leading-[18px] font-bold text-[#dedede]">Currently: <span className="font-normal text-[#81d4fa]">busdefault.png</span></div>
                  <div className="mt-[9px] flex h-[26px] items-center">
                    <span className="-mt-[6px] w-[58.5px] font-bold text-[#dedede]">Change:</span>
                    <span className="flex h-[25px] w-[105px] items-center justify-center rounded-[2px] border border-[#767676] bg-[#efefef] text-[16.25px] text-black">Choose File</span>
                    <span className="ml-[5px] text-[16.25px] text-[#eee]">No file chosen</span>
                  </div>
                </div>
              </div>
              <div className="mt-[37px] flex h-[80px] items-start rounded-[5px] border border-[#272727] bg-[#212121] pt-[15px] pr-[18px] pl-[17px] text-[16.25px] text-white">
                <div className="flex h-[44px] w-[87px] items-center justify-center rounded-[5px] bg-[#ba2121] text-[17.5px]">Delete</div>
                <div className="flex-1" />
                <div className="mr-[11px] flex h-[44px] w-[194px] items-center justify-center rounded-[5px] bg-[#264b5d]">Save and add another</div>
                <div className="mr-[10px] flex h-[44px] w-[223px] items-center justify-center rounded-[5px] bg-[#264b5d]">Save and continue editing</div>
                <div className="flex h-[44px] w-[76px] items-center justify-center rounded-[5px] bg-[#417690]">SAVE</div>
              </div>
            </main>
          </div>
        </div>
        <div className="flex w-[20px] shrink-0 flex-col items-center bg-[#f1f1f1]">
          <div className="flex h-[21px] items-center"><svg width="10" height="6" viewBox="0 0 10 6" className="mt-1"><path d="M5 0L10 5.500H0Z" fill="#a3a3a3" /></svg></div>
          <div className="h-[858px] w-[17px] bg-[#c1c1c1]" />
          <div className="mt-auto flex h-[21px] items-center"><svg width="10" height="6" viewBox="0 0 10 6"><path d="M5 5.500L10 0H0Z" fill="#505050" /></svg></div>
        </div>
      </div>
    </div>
  );
}
